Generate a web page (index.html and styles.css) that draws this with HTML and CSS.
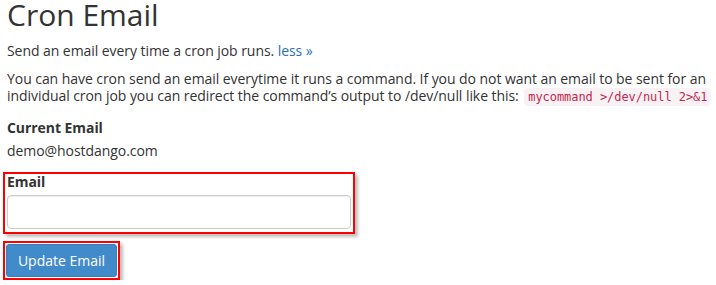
FILE: index.html
```html
<!DOCTYPE html>
<html lang="en">
  <head>
    <meta charset="UTF-8" />
    <meta name="viewport" content="width=device-width, initial-scale=1.0" />
    <title>Cron Email</title>
    <link rel="stylesheet" href="styles.css">
  </head>
  <body>
    <div class="page">
      <h1>Cron Email</h1>
      <p class="intro">Send an email every time a cron job runs. <a href="#">less &raquo;</a></p>
      <p class="desc">You can have cron send an email everytime it runs a command. If you do not want an email to be sent for an individual cron job you can redirect the command&rsquo;s output to /dev/null like this: <code>mycommand &gt;/dev/null 2&gt;&amp;1</code></p>
      <div class="current">
        <div class="label">Current Email</div>
        <div class="value">demo@hostdango.com</div>
      </div>
      <div class="highlight field">
        <label for="email">Email</label>
        <input type="text" id="email">
      </div>
      <div class="highlight btnwrap">
        <button id="update">Update Email</button>
      </div>
    </div>
  </body>
</html>
```

FILE: styles.css
```css
* {
  margin: 0;
  padding: 0;
  box-sizing: border-box;
}

body {
  font-family: "Open Sans", "DejaVu Sans", sans-serif;
  font-size: 14px;
  line-height: 17px;
  letter-spacing: -0.06px;
  color: #333;
  background: #fff;
}

.page {
  padding: 0 0 0 7px;
  display: flex;
  flex-direction: column;
  align-items: flex-start;
}

h1 {
  font-size: 30px;
  line-height: 32px;
  font-weight: 400;
  letter-spacing: 0;
  color: #333;
  margin-top: -1px;
}

.intro {
  margin-top: 11px;
}

a {
  color: #2a6db2;
  text-decoration: none;
}

.desc {
  margin-top: 11px;
}

code {
  font-family: "DejaVu Sans Mono", "Liberation Mono", monospace;
  font-size: 12px;
  white-space: nowrap;
  color: #c7254e;
  background: #f9f2f4;
  padding: 2px 4px;
  margin-left: 2px;
  border-radius: 4px;
}

.current {
  margin-top: 13px;
}

.label,
label {
  font-weight: 700;
}

.value {
  margin-top: 6px;
}

.highlight {
  border: 2px solid #f00;
  box-shadow: 3px 3px 3px rgba(0, 0, 0, 0.25);
  margin-left: -4px;
}

.field {
  margin-top: 13px;
  width: 352px;
  padding: 0 2px 3px 2px;
  display: flex;
  flex-direction: column;
}

.field label {
  line-height: 14px;
  height: 21px;
  padding-top: 1px;
}

.field input {
  width: 100%;
  height: 34px;
  border: 1px solid #ccc;
  border-radius: 4px;
  box-shadow: inset 0 1px 1px rgba(0, 0, 0, 0.075);
  font-family: inherit;
  font-size: 14px;
  padding: 6px 12px;
}

.btnwrap {
  margin-top: 7px;
  padding: 1px;
}

#update {
  display: block;
  width: 111px;
  height: 33px;
  background: #428bca;
  border: 1px solid #357ebd;
  border-radius: 3px;
  color: #fff;
  font-family: inherit;
  font-size: 14px;
  letter-spacing: 0;
  cursor: pointer;
}
```
